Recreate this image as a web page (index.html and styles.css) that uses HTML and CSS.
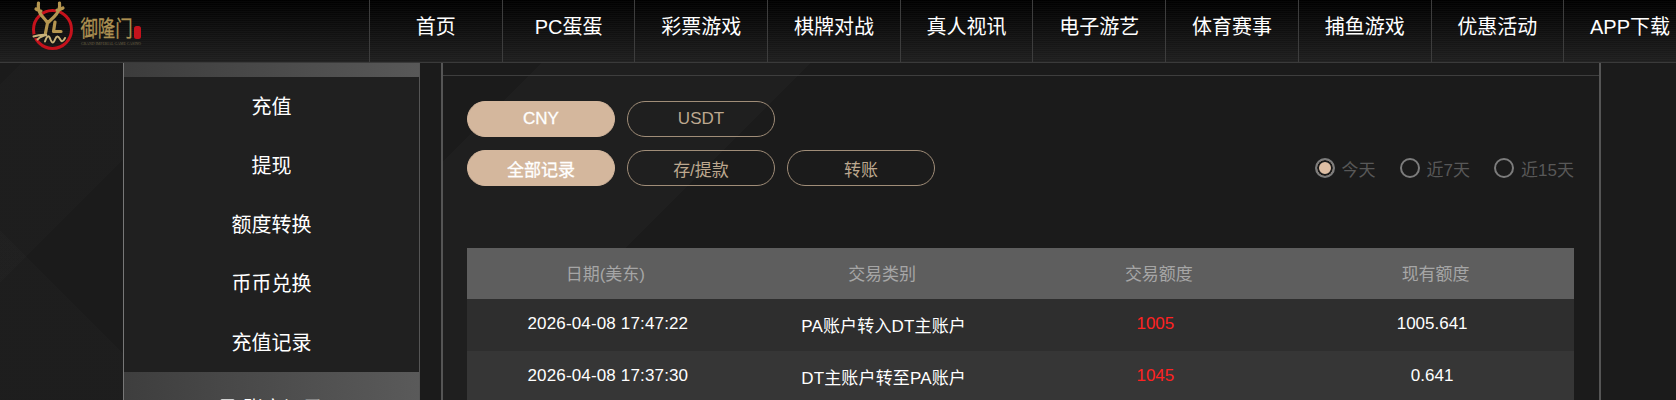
FILE: index.html
```html
<!DOCTYPE html>
<html lang="zh-CN">
<head>
<meta charset="utf-8">
<title>御隆门</title>
<link rel="stylesheet" href="styles.css">
</head>
<body>
<header class="topbar">
  <a class="logo" href="#">
    <svg class="logo-art" width="122" height="62" viewBox="0 0 122 62">
      <circle class="logo-ring" cx="22.5" cy="29.5" r="19"></circle>
      <path class="logo-halo" d="M3.500 36.500c5-1.500 9-2 13.500-1.500M15 41.500c2-6 4-7 5.500-2 1.500 4 3 4 4.500 0 1.500-4 3-4 5-.5 1.500 3 3 3 5-1"></path>
      <path class="logo-stroke" d="M8.500 3c-.5 4 0 8 2 11 2 3 4.500 5 6.500 8M6 9c2 1 3 2 5 2M29.500 3c.5 4-.5 8-3 11-3 4-7 7-9 9l-2 10M33 8c-2 1-4 2-6 2"></path>
      <path class="logo-stroke" d="M25 22l-1.500 9.500h7.500"></path>
      <path class="logo-wave" d="M3.500 36.500c5-1.500 9-2 13.500-1.500-4 .5-7 2-9.500 4.500M15 41.500c2-6 4-7 5.500-2 1.500 4 3 4 4.500 0 1.500-4 3-4 5-.5 1.500 3 3 3 5-1"></path>
      <text class="logo-name" x="50.500" y="35.500" textLength="52" lengthAdjust="spacingAndGlyphs">御隆门</text>
      <text class="logo-tag" x="51" y="45" textLength="60" lengthAdjust="spacingAndGlyphs">GRAND IMPERIAL GAME CASINO</text>
      <rect class="logo-seal" x="104" y="26" width="7" height="13" rx="2.500"></rect>
    </svg>
  </a>
  <nav class="mainnav">
    <a class="nav-item" href="#">首页</a>
    <a class="nav-item" href="#">PC蛋蛋</a>
    <a class="nav-item" href="#">彩票游戏</a>
    <a class="nav-item" href="#">棋牌对战</a>
    <a class="nav-item" href="#">真人视讯</a>
    <a class="nav-item" href="#">电子游艺</a>
    <a class="nav-item" href="#">体育赛事</a>
    <a class="nav-item" href="#">捕鱼游戏</a>
    <a class="nav-item" href="#">优惠活动</a>
    <a class="nav-item" href="#">APP下载</a>
  </nav>
</header>
<div class="page">
  <aside class="sidebar">
    <div class="side-head"></div>
    <a class="side-item" href="#">充值</a>
    <a class="side-item" href="#">提现</a>
    <a class="side-item" href="#">额度转换</a>
    <a class="side-item" href="#">币币兑换</a>
    <a class="side-item" href="#">充值记录</a>
    <a class="side-item side-active" href="#">
      <svg class="side-icon" width="15" height="16" viewBox="0 0 15 16"><rect x="1" y="1" width="13" height="14" rx="1"></rect><path d="M4 5h7M4 8h7"></path></svg>
      账户记录
    </a>
  </aside>
  <main class="panel">
    <div class="panel-strip"></div>
    <div class="panel-body">
      <div class="btn-row">
        <button class="pill pill-on">CNY</button>
        <button class="pill">USDT</button>
      </div>
      <div class="btn-row btn-row-split">
        <button class="pill pill-on">全部记录</button>
        <button class="pill">存/提款</button>
        <button class="pill">转账</button>
        <div class="ranges">
          <span class="range"><i class="radio radio-on"></i>今天</span>
          <span class="range"><i class="radio"></i>近7天</span>
          <span class="range"><i class="radio"></i>近15天</span>
        </div>
      </div>
      <table class="records">
        <thead>
          <tr><th>日期(美东)</th><th>交易类别</th><th>交易额度</th><th>现有额度</th></tr>
        </thead>
        <tbody>
          <tr><td class="date">2026-04-08 17:47:22</td><td class="kind">PA账户转入DT主账户</td><td class="num amount">1005</td><td class="num">1005.641</td></tr>
          <tr><td class="date">2026-04-08 17:37:30</td><td class="kind">DT主账户转至PA账户</td><td class="num amount">1045</td><td class="num">0.641</td></tr>
        </tbody>
      </table>
    </div>
  </main>
</div>
</body>
</html>
```
FILE: styles.css
```css
* { box-sizing: border-box; }
html, body {
  margin: 0;
  height: 400px;
  overflow: hidden;
}
body {
  font-family: "Liberation Sans", "Noto Sans CJK SC", sans-serif;
  color: #fff;
  background-color: #1b1b1b;
  background-image:
    linear-gradient(135deg, transparent 0 60px, rgba(255,255,255,.012) 60px 200px, transparent 200px),
    linear-gradient(45deg, rgba(255,255,255,.012) 0 120px, transparent 120px);
}
a { color: inherit; text-decoration: none; }

.topbar {
  display: flex;
  height: 63px;
  overflow: hidden;
  border-bottom: 1px solid #3a3a3a;
  background-image:
    repeating-linear-gradient(0deg, rgba(255,255,255,.025) 0 1px, transparent 1px 2px),
    linear-gradient(180deg, #000 0, #1f1f1f 100%);
}
.logo { flex: 0 0 369px; padding-left: 30px; }
.logo-art { display: block; }
.logo-ring { fill: none; stroke: #c5121c; stroke-width: 3; }
.logo-halo { fill: none; stroke: #141414; stroke-width: 4; }
.logo-stroke { fill: none; stroke: #b59650; stroke-width: 3.2; stroke-linecap: round; stroke-linejoin: round; }
.logo-wave { fill: none; stroke: #c8b27a; stroke-width: 2; stroke-linecap: round; }
.logo-name { fill: #ad9152; font-size: 22px; stroke: #ad9152; stroke-width: .3px; }
.logo-tag { fill: #6f6448; font-family: "Liberation Serif", serif; font-size: 4px; }
.logo-seal { fill: #c5121c; }

.mainnav { display: flex; }
.nav-item {
  flex: 0 0 132.7px;
  display: flex;
  align-items: center;
  justify-content: center;
  padding-bottom: 12px;
  font-size: 20px;
  border-left: 1px solid #3d3d3d;
}

.page {
  display: flex;
  align-items: flex-start;
  padding-left: 123px;
}
.sidebar {
  flex: 0 0 297px;
  border-left: 1px solid #777;
  border-right: 1px solid #555;
  background-color: #202020;
}
.side-head {
  height: 14px;
  background: linear-gradient(90deg, #3c3c3c, #585858);
}
.side-item {
  display: flex;
  align-items: center;
  justify-content: center;
  gap: 8px;
  height: 59px;
  padding-bottom: 2px;
  font-size: 20px;
}
.side-active {
  height: 70px;
  padding-bottom: 0;
  background: linear-gradient(90deg, #3e3e3e, #5a5a5a);
}
.side-icon { fill: none; stroke: #fff; stroke-width: 1.5; }

.panel {
  flex: 0 0 1160px;
  height: 337px;
  margin-left: 21px;
  border-left: 2px solid #555;
  border-right: 2px solid #555;
  background-color: #1b1b1b;
  background-image: linear-gradient(135deg, transparent 0 70px, rgba(255,255,255,.02) 70px 260px, transparent 260px);
}
.panel-strip {
  height: 13px;
  border-bottom: 1px solid #3e3e3e;
}
.panel-body { padding: 25px 25px 0 24px; }
.btn-row { display: flex; gap: 12px; margin-bottom: 13px; }
.btn-row-split { align-items: center; margin-bottom: 62px; }
.pill {
  width: 148px;
  height: 36px;
  padding: 0;
  border: 1px solid #a08d78;
  border-radius: 18px;
  background: transparent;
  color: #bda88f;
  font: inherit;
  font-size: 17px;
}
.pill-on {
  border-color: #d4b79d;
  background: #d4b79d;
  color: #fff;
  -webkit-text-stroke: .3px #fff;
}
.ranges {
  display: flex;
  gap: 24px;
  margin-left: auto;
  font-size: 17px;
  color: #585858;
}
.range { display: flex; align-items: center; gap: 7px; }
.radio {
  width: 20px;
  height: 20px;
  border: 2px solid #7c7c7c;
  border-radius: 50%;
}
.radio-on { background: #dfbfa4; box-shadow: inset 0 0 0 2px #1b1b1b; }

.records {
  width: 100%;
  table-layout: fixed;
  border-collapse: collapse;
  text-align: center;
  font-size: 17px;
}
.records th {
  height: 51px;
  padding: 0 0 2px;
  background: #5e5e5e;
  color: #a6a6a6;
  font-weight: 400;
}
.records td {
  height: 52px;
  padding: 0 0 2px;
  background: #2e2e2e;
}
.records tr:nth-child(2) td { background: #363636; }
.records .date { padding-left: 5px; letter-spacing: .15px; }
.records .kind { padding-left: 3px; letter-spacing: .15px; }
.records .num { padding-right: 7px; }
.records .amount { color: #ff2222; }
```
